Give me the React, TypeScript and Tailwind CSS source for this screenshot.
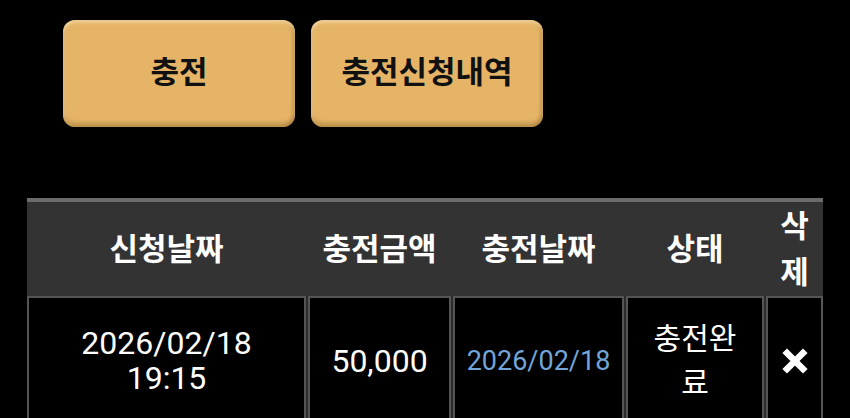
import React from "react";

const font = { fontFamily: 'Roboto, "Noto Sans CJK KR", sans-serif' };

function GoldButton({ label }: { label: string }) {
  return (
    <button
      className="flex h-[107px] w-[232px] items-center justify-center rounded-[12px] bg-[#e5b467] text-[31px] font-bold text-[#111] shadow-[inset_0_3px_3px_rgba(255,240,200,0.45),inset_0_-4px_4px_rgba(120,80,20,0.35),inset_3px_0_3px_rgba(255,240,200,0.2),inset_-3px_0_3px_rgba(120,80,20,0.2)]"
    >
      {label}
    </button>
  );
}

function DeleteIcon() {
  return (
    <svg width="26" height="26" viewBox="0 0 26 26" aria-hidden="true">
      <path d="M5 5 L21 21 M21 5 L5 21" stroke="#fff" strokeWidth="6.5" strokeLinecap="square" />
    </svg>
  );
}

const cols = "grid grid-cols-[279px_143px_171px_138px_57px] gap-x-[2px]";

export default function App() {
  return (
    <div className="min-h-screen bg-black text-white" style={font}>
      <div className="flex gap-[16px] pl-[63px] pt-[20px]">
        <GoldButton label="충전" />
        <GoldButton label="충전신청내역" />
      </div>

      <div className="ml-[27px] mt-[71px] w-[796px]">
        <div className={`${cols} h-[98px] border-t-4 border-[#6b6b6b] bg-[#333333] pt-[2px] text-[31px] font-bold`}>
          <div className="flex items-center justify-center">신청날짜</div>
          <div className="flex items-center justify-center">충전금액</div>
          <div className="flex items-center justify-center">충전날짜</div>
          <div className="flex items-center justify-center">상태</div>
          <div className="flex flex-col items-center justify-center leading-[46px]">
            <span>삭</span>
            <span>제</span>
          </div>
        </div>

        <div className={`${cols} bg-[#2c2c2c]`}>
          <div className="flex h-[130px] flex-col items-center justify-center border-2 border-[#555555] bg-black text-[32px] leading-[35px]">
            <span>2026/02/18</span>
            <span>19:15</span>
          </div>
          <div className="flex h-[130px] items-center justify-center border-2 border-[#555555] bg-black text-[32px]">
            50,000
          </div>
          <div className="flex h-[130px] items-center justify-center border-2 border-[#555555] bg-black text-[27px] text-[#72a6d8]">
            2026/02/18
          </div>
          <div className="flex h-[130px] flex-col items-center justify-center border-2 border-[#555555] bg-black text-[30px] leading-[44px]">
            <span>충전완</span>
            <span>료</span>
          </div>
          <div className="flex h-[130px] items-center justify-center border-2 border-[#555555] bg-black">
            <DeleteIcon />
          </div>
        </div>
      </div>
    </div>
  );
}
